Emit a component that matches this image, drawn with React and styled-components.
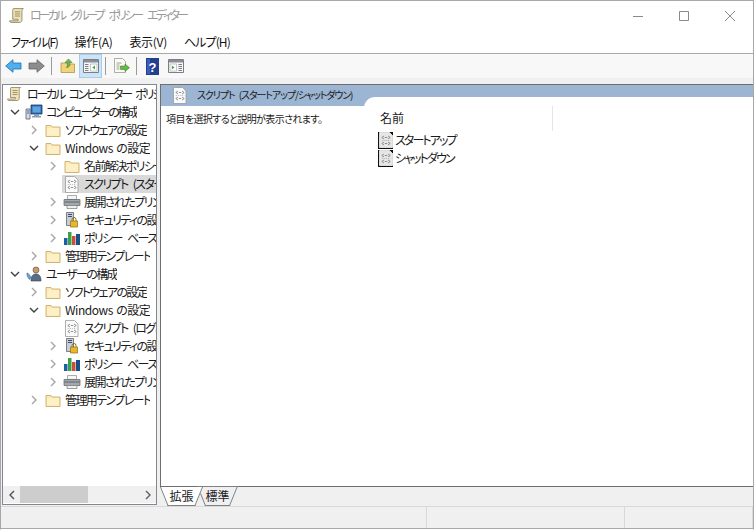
import React from "react"
import styled, { createGlobalStyle } from 'styled-components'

const Global = createGlobalStyle`
html, body { margin: 0; padding: 0; background: #fff; }
body {
  font-family: "Noto Sans CJK JP", "Noto Sans", sans-serif;
  font-feature-settings: "palt" 1;
  color: #1a1a1a;
}
`;

const ScrollIcon = ({ size = 16 }) => (
  <svg width={size} height={size} viewBox="0 0 16 16">
    <path d="M4 1.500h9.500c-1 .6-1.300 1.500-1.300 3v7.500c0 1.400-.8 2.500-2 2.500H2c-.9 0-1.500-.6-1.500-1.500h8c0-1 .2-1.500 0-1.500H3.500V4c0-1.300 0-2.500.5-2.500z" fill="#efe3b8" stroke="#8c7f5c" strokeWidth=".8" />
    <path d="M5.500 4.500h5M5.500 6.500h5M5.500 8.500h5" stroke="#8c7f5c" strokeWidth=".8" />
  </svg>
)

const FolderIcon = () => (
  <svg width="16" height="16" viewBox="0 0 16 16">
    <path d="M1 3.500h5l1.200 1.500H15v9.500H1z" fill="#fbe9b0" stroke="#c9ad6b" strokeWidth=".9" />
    <path d="M2 6h12v7.500H2z" fill="#fdf0c6" />
  </svg>
)

const ScriptIcon = ({ dark }) => (
  <svg width="16" height="17" viewBox="0 0 16 17" style={{ flex: 'none' }}>
    {dark && <path d="M0 0h15v17H0z" fill="#111" />}
    <path d={dark ? "M1.500 .5h10l3 3v12h-13z" : "M1.500 .5h9l3.500 3.500v12.500h-12.500z"} fill={dark ? "#e6e6e6" : "#fbfbfb"} stroke={dark ? "#f4f4f4" : "#9a9a9a"} strokeWidth=".8" />
    <path d="M6 4L3.800 5.500 6 7M10 4l2.200 1.500L10 7M6.800 5.500h2.400" stroke="#777" strokeWidth=".8" fill="none" />
    <path d="M3.800 8.500h8.400" stroke="#aaa" strokeWidth=".8" strokeDasharray="1 1" />
    <path d="M6 10l-2.200 1.500L6 13M10 10l2.200 1.500L10 13M6.800 11.500h2.400" stroke="#777" strokeWidth=".8" fill="none" />
  </svg>
)

const ComputerIcon = () => (
  <svg width="18" height="16" viewBox="0 0 18 16">
    <path d="M6 1h11v9H6z" fill="#2f6fb5" stroke="#16365e" strokeWidth=".8" />
    <path d="M7.500 2.500h8v6h-8z" fill="#5fa3e0" />
    <path d="M9 10h5v2h2v1.500H7V12h2z" fill="#8b9bb0" />
    <path d="M1 5h4v10H1z" fill="#d9dde3" stroke="#56606e" strokeWidth=".8" />
    <path d="M2 7h2M2 9h2" stroke="#2f6fb5" />
  </svg>
)

const UserIcon = () => (
  <svg width="18" height="16" viewBox="0 0 18 16">
    <circle cx="11" cy="4" r="3" fill="#c9996e" stroke="#5a4535" strokeWidth=".6" />
    <path d="M6 15c0-5 2-7 5-7s5 2 5 7z" fill="#5a6d85" stroke="#33404f" strokeWidth=".6" />
    <path d="M2 7c1.500 0 3 2.500 4 4.500l-1.500 2C3 12 1.500 9.500 2 7z" fill="#6fa6dc" stroke="#2e5f93" strokeWidth=".6" />
  </svg>
)

const PrinterIcon = () => (
  <svg width="18" height="16" viewBox="0 0 18 16">
    <path d="M4.500 1.500h9v4h-9z" fill="#f4f4f4" stroke="#8a8a8a" strokeWidth=".7" />
    <path d="M1 5.500h16v6H1z" fill="#a2a8ae" stroke="#5c6268" strokeWidth=".7" />
    <path d="M1.500 7.500h15v1h-15z" fill="#5c6268" />
    <path d="M4 11.500h10v3H4z" fill="#eeeeee" stroke="#7a7a7a" strokeWidth=".7" />
  </svg>
)

const SecurityIcon = () => (
  <svg width="16" height="16" viewBox="0 0 16 16">
    <path d="M2.500 .5h7v13h-7z" fill="#c9ced4" stroke="#5d6670" strokeWidth=".8" />
    <path d="M4 2.500h4M4 4.500h4" stroke="#34506e" strokeWidth="1" />
    <path d="M8 9V7.500a2 2 0 0 1 4 0V9" fill="none" stroke="#8c6d1f" strokeWidth="1" />
    <path d="M6.500 9h7v6h-7z" fill="#e8b923" stroke="#8c6d1f" strokeWidth=".7" />
  </svg>
)

const ChartIcon = () => (
  <svg width="18" height="16" viewBox="0 0 18 16">
    <path d="M1 8h3.500v7H1z" fill="#1b5fa5" />
    <path d="M5 2h3.500v13H5z" fill="#3aa04a" />
    <path d="M9 6h3.500v9H9z" fill="#c9503c" />
    <path d="M13 4h4v11h-4z" fill="#1b4f88" />
  </svg>
)

const BackIcon = () => (
  <svg width="17" height="16" viewBox="0 0 17 16">
    <path d="M.7 8L8 1.700V5h8v6H8v3.300z" fill="#4fb0ec" stroke="#1c6fb0" strokeWidth=".8" />
  </svg>
)

const ForwardIcon = () => (
  <svg width="17" height="16" viewBox="0 0 17 16">
    <path d="M16.300 8L9 1.700V5H1v6h8v3.300z" fill="#8c8c8c" stroke="#666" strokeWidth=".8" />
  </svg>
)

const UpIcon = () => (
  <svg width="16" height="16" viewBox="0 0 16 16">
    <path d="M1 5h5l1 1h7.500v8.500H1z" fill="#f3d27c" stroke="#b3924a" strokeWidth=".8" />
    <path d="M8.500 1L12 4.500H9.800V7c0 1.500-1.500 2.500-3.500 2.500C7.500 8.500 7.500 7.500 7.500 6V4.500H5z" fill="#6fb84a" stroke="#3f7f2a" strokeWidth=".6" />
  </svg>
)

const PaneIcon = ({ right }) => (
  <svg width="16" height="16" viewBox="0 0 16 16">
    <path d="M.5 1.500h15v13H.5z" fill="#f7f7f7" stroke="#7b7f85" />
    <path d="M1 2h14v2.500H1z" fill="#8a8f96" />
    {right ? (
      <>
        <path d="M2 6h6.500v7H2z" fill="#fff" stroke="#a0a4aa" strokeWidth=".6" />
        <path d="M3.800 7.500l2.700 2-2.700 2z" fill="#4aa24a" />
        <path d="M10.500 6.500h3.500M10.500 8.500h3.500M10.500 10.500h3.500M10.500 12.500h3.500" stroke="#7b7f85" />
      </>
    ) : (
      <>
        <path d="M2 6.500h3.500M2 8.500h3.500M2 10.500h3.500M2 12.500h3.500" stroke="#7b7f85" />
        <path d="M7.500 6h6.500v7H7.500z" fill="#fff" stroke="#a0a4aa" strokeWidth=".6" />
        <path d="M12 7.500l-2.700 2 2.700 2z" fill="#4aa24a" />
      </>
    )}
  </svg>
)

const ExportIcon = () => (
  <svg width="17" height="16" viewBox="0 0 17 16">
    <path d="M1.500 .5h8l3 3v11h-11z" fill="#fbfbf6" stroke="#9a9a8c" strokeWidth=".8" />
    <path d="M3.500 5h5M3.500 7h3M3.500 9h3M3.500 11h3" stroke="#8a8a80" strokeWidth=".8" />
    <path d="M12 6l4.500 3.700-4.500 3.700v-2H7.500V8H12z" fill="#67b84a" stroke="#3f7f2a" strokeWidth=".6" />
  </svg>
)

const HelpIcon = () => (
  <svg width="13" height="17" viewBox="0 0 13 17">
    <path d="M0 0h13v17H0z" fill="#23408f" />
    <path d="M1 1h3v15H1z" fill="#3b5cb8" />
    <text x="6.500" y="13.500" textAnchor="middle" fontSize="13" fontFamily="Liberation Sans" fontWeight="700" fill="#fff">?</text>
  </svg>
)

const Chevron = ({ dir }) => {
  const paths = { down: "M1 3l4 4 4-4", right: "M3 1l4 4-4 4", left: "M7 1L3 5l4 4" }
  const colors = { down: "#404040", right: "#a6a6a6", left: "#505050", end: "#606060" }
  return (
    <svg width="10" height="10" viewBox="0 0 10 10">
      <path d={dir === 'end' ? paths.right : paths[dir]} fill="none" stroke={colors[dir]} strokeWidth="1.400" />
    </svg>
  )
}

const icons = {
  scroll: <ScrollIcon />, computer: <ComputerIcon />, user: <UserIcon />, folder: <FolderIcon />,
  script: <ScriptIcon />, printer: <PrinterIcon />, security: <SecurityIcon />, chart: <ChartIcon />,
}

const treeRows = [
  { level: 0, icon: 'scroll', label: 'ローカル コンピューター ポリシー', tight: true },
  { level: 1, icon: 'computer', label: 'コンピューターの構成', open: true, tight: true },
  { level: 2, icon: 'folder', label: 'ソフトウェアの設定', closed: true },
  { level: 2, icon: 'folder', label: 'Windows の設定', open: true, latin: true },
  { level: 3, icon: 'folder', label: '名前解決ポリシー', closed: true },
  { level: 3, icon: 'script', label: 'スクリプト (スタートアップ/シャットダウン)', selected: true },
  { level: 3, icon: 'printer', label: '展開されたプリンター', closed: true },
  { level: 3, icon: 'security', label: 'セキュリティの設定', closed: true },
  { level: 3, icon: 'chart', label: 'ポリシー ベースの QoS', closed: true },
  { level: 2, icon: 'folder', label: '管理用テンプレート', closed: true },
  { level: 1, icon: 'user', label: 'ユーザーの構成', open: true },
  { level: 2, icon: 'folder', label: 'ソフトウェアの設定', closed: true },
  { level: 2, icon: 'folder', label: 'Windows の設定', open: true, latin: true },
  { level: 3, icon: 'script', label: 'スクリプト (ログオン/ログオフ)' },
  { level: 3, icon: 'security', label: 'セキュリティの設定', closed: true },
  { level: 3, icon: 'chart', label: 'ポリシー ベースの QoS', closed: true },
  { level: 3, icon: 'printer', label: '展開されたプリンター', closed: true },
  { level: 2, icon: 'folder', label: '管理用テンプレート', closed: true },
]

const App = () => {
  return (
    <Window>
      <Global />
      <TitleBar>
        <ScrollIcon size={17} />
        <TitleText>ローカル グループ ポリシー エディター</TitleText>
        <WinButtons>
          <WinBtn>
            <svg width="12" height="12" viewBox="0 0 12 12"><path d="M1 6.500h10" stroke="#8a8a8a" /></svg>
          </WinBtn>
          <WinBtn>
            <svg width="12" height="12" viewBox="0 0 12 12"><path d="M1.500 1.500h9v9h-9z" fill="none" stroke="#8a8a8a" /></svg>
          </WinBtn>
          <WinBtn>
            <svg width="12" height="12" viewBox="0 0 12 12"><path d="M1 1l10 10M11 1L1 11" stroke="#8a8a8a" /></svg>
          </WinBtn>
        </WinButtons>
      </TitleBar>

      <MenuBar>
        <MenuItem spacing="-1.4px">ファイル(F)</MenuItem>
        <MenuItem spacing="-0.3px">操作(A)</MenuItem>
        <MenuItem spacing="-0.3px">表示(V)</MenuItem>
        <MenuItem spacing="-0.9px">ヘルプ(H)</MenuItem>
      </MenuBar>

      <Toolbar>
        <ToolBtn><BackIcon /></ToolBtn>
        <ToolBtn><ForwardIcon /></ToolBtn>
        <ToolSep />
        <ToolBtn><UpIcon /></ToolBtn>
        <ToolBtn active><PaneIcon /></ToolBtn>
        <ToolSep />
        <ToolBtn><ExportIcon /></ToolBtn>
        <ToolSep />
        <ToolBtn><HelpIcon /></ToolBtn>
        <ToolBtn><PaneIcon right /></ToolBtn>
      </Toolbar>

      <Content>
        <TreePanel>
          <TreeList>
            {treeRows.map((r, i) => (
              <TreeRow key={i} level={r.level}>
                {r.level > 0 && (
                  <Expander>
                    {r.open && <Chevron dir="down" />}
                    {r.closed && <Chevron dir="right" />}
                  </Expander>
                )}
                <TreeItem selected={r.selected}>
                  <TreeIcon>{icons[r.icon]}</TreeIcon>
                  <TreeLabel latin={r.latin} tight={r.tight}>{r.label}</TreeLabel>
                </TreeItem>
              </TreeRow>
            ))}
          </TreeList>
          <HScroll>
            <ScrollBtn><Chevron dir="left" /></ScrollBtn>
            <ScrollTrack><ScrollThumb /></ScrollTrack>
            <ScrollBtn><Chevron dir="end" /></ScrollBtn>
          </HScroll>
        </TreePanel>

        <RightColumn>
          <DetailPanel>
            <DescPane>
              <DescHeader>
                <ScriptIcon />
                <DescTitle>スクリプト (スタートアップ/シャットダウン)</DescTitle>
              </DescHeader>
              <DescText>項目を選択すると説明が表示されます。</DescText>
            </DescPane>
            <ListPane>
              <ListArea>
                <ListHead>
                  <NameCol>名前</NameCol>
                </ListHead>
                <ListRow><ScriptIcon dark /><RowText>スタートアップ</RowText></ListRow>
                <ListRow><ScriptIcon dark /><RowText>シャットダウン</RowText></ListRow>
              </ListArea>
            </ListPane>
          </DetailPanel>
          <Tabs>
            <Tab first>拡張</Tab>
            <Tab>標準</Tab>
          </Tabs>
        </RightColumn>
      </Content>

      <StatusBar>
        <StatusCell />
        <StatusCell w="197px" />
        <StatusCell w="127px" />
      </StatusBar>
    </Window>
  )
}

export default App;

const Window = styled.div`
width: 754px;
height: 530px;
box-sizing: border-box;
display: flex;
flex-direction: column;
background: #fff;
overflow: hidden;
border-top: 1px solid #a8a8a8;
border-left: 1px solid #a8a8a8;
border-right: 1px solid #a8a8a8;
border-bottom: 1px solid #fff;
font-size: 12px;
`;

const TitleBar = styled.div`
height: 29px;
display: flex;
align-items: center;
padding-left: 8px;
color: #9a9a9a;
`;

const TitleText = styled.div`
margin-left: 4px;
padding-bottom: 2px;
font-size: 12px;
letter-spacing: -2.9px;
word-spacing: 6px;
`;

const WinButtons = styled.div`
margin-left: auto;
display: flex;
`;

const WinBtn = styled.div`
width: 46px;
height: 29px;
display: flex;
align-items: center;
justify-content: center;
`;

const MenuBar = styled.div`
height: 24px;
box-sizing: border-box;
display: flex;
align-items: center;
gap: 17px;
padding-left: 10px;
border-bottom: 1px solid #a8a8a8;
font-size: 12px;
color: #111;
`;

const MenuItem = styled.div`
white-space: nowrap;
letter-spacing: ${props => props.spacing};
`;

const Toolbar = styled.div`
height: 24px;
flex: none;
display: flex;
align-items: center;
padding-left: 1px;
background: #f8f8f8;
`;

const ToolBtn = styled.div`
width: 23px;
height: 24px;
box-sizing: border-box;
display: flex;
align-items: center;
justify-content: center;
background: ${props => props.active ? '#cce4f7' : 'transparent'};
border: 1px solid ${props => props.active ? '#a5cdec' : 'transparent'};
`;

const ToolSep = styled.div`
width: 1px;
height: 18px;
background: #9a9a9a;
margin: 0 4px 0 3px;
`;

const Content = styled.div`
flex: 1;
min-height: 0;
display: flex;
gap: 3px;
padding: 6px 0 0 1px;
background: #f0f0f0;
`;

const TreePanel = styled.div`
width: 155px;
height: 421px;
box-sizing: border-box;
display: flex;
flex-direction: column;
background: #fff;
border: 1px solid #828790;
`;

const TreeList = styled.div`
flex: 1;
min-height: 0;
overflow: hidden;
`;

const TreeRow = styled.div`
height: 18px;
display: flex;
align-items: center;
padding-left: ${props => props.level === 0 ? 2 : 2 + (props.level - 1) * 19}px;
`;

const Expander = styled.div`
width: 19px;
flex: none;
display: flex;
align-items: center;
justify-content: center;
`;

const TreeItem = styled.div`
flex: 1;
min-width: 0;
height: 18px;
display: flex;
align-items: center;
gap: 3px;
padding-left: 1px;
background: ${props => props.selected ? '#d9d9d9' : 'transparent'};
`;

const TreeIcon = styled.div`
width: 18px;
height: 16px;
flex: none;
display: flex;
justify-content: center;
`;

const TreeLabel = styled.div`
white-space: nowrap;
overflow: hidden;
padding-bottom: 2px;
letter-spacing: ${props => props.latin ? '-0.45px' : props.tight ? '-2.2px' : '-1.6px'};
word-spacing: ${props => props.latin ? '1px' : '4px'};
`;

const HScroll = styled.div`
height: 17px;
flex: none;
display: flex;
background: #f0f0f0;
margin-bottom: 1px;
`;

const ScrollBtn = styled.div`
width: 17px;
flex: none;
display: flex;
align-items: center;
justify-content: center;
`;

const ScrollTrack = styled.div`
flex: 1;
`;

const ScrollThumb = styled.div`
width: 68px;
height: 100%;
background: #cdcdcd;
`;

const RightColumn = styled.div`
flex: 1;
min-width: 0;
display: flex;
flex-direction: column;
`;

const DetailPanel = styled.div`
height: 403px;
flex: none;
box-sizing: border-box;
display: flex;
background: #fff;
border: 1px solid #6e6e6e;
border-right: none;
`;

const DescPane = styled.div`
width: 203px;
flex: none;
`;

const DescHeader = styled.div`
height: 21px;
display: flex;
align-items: center;
gap: 9px;
padding-left: 11px;
background: #9bb5d2;
font-size: 10px;
color: #1a1a1a;
`;

const DescTitle = styled.div`
white-space: nowrap;
padding-bottom: 2px;
letter-spacing: -1.1px;
word-spacing: 3px;
`;

const DescText = styled.div`
padding: 5px 0 0 5px;
font-size: 10px;
line-height: 15px;
white-space: nowrap;
letter-spacing: -0.6px;
`;

const ListPane = styled.div`
flex: 1;
background: linear-gradient(#9bb5d2 0 21px, #fff 21px);
`;

const ListArea = styled.div`
margin-top: 12px;
height: calc(100% - 12px);
padding-top: 9px;
box-sizing: border-box;
background: #fff;
border-top-left-radius: 11px;
`;

const ListHead = styled.div`
height: 25px;
width: 189px;
box-sizing: border-box;
border-right: 1px solid #e5e5e5;
padding: 3px 0 0 16px;
`;

const NameCol = styled.div`
font-size: 12px;
`;

const ListRow = styled.div`
height: 18px;
display: flex;
align-items: center;
padding-left: 14px;
gap: 1px;
font-size: 12px;
`;

const RowText = styled.span`
letter-spacing: -1.9px;
padding-bottom: 1px;
`;

const Tabs = styled.div`
height: 19px;
display: flex;
`;

const Tab = styled.div`
position: relative;
z-index: ${props => props.first ? 2 : 1};
height: 19px;
width: ${props => props.first ? 43 : 41}px;
margin-left: ${props => props.first ? 0 : -6}px;
display: flex;
align-items: center;
justify-content: center;
font-size: 12px;
padding-bottom: 2px;
box-sizing: border-box;
&::before, &::after {
  content: "";
  position: absolute;
  top: ${props => props.first ? '0' : '-1px'};
  bottom: 0;
  width: 55%;
  z-index: -1;
  background: ${props => props.first ? '#fff' : '#f0f0f0'};
  border-bottom: 1px solid #808080;
  border-top: ${props => props.first ? 'none' : '1px solid #808080'};
}
&::before {
  left: 0;
  border-left: 1px solid #808080;
  transform-origin: top left;
  transform: skewX(22deg);
}
&::after {
  right: 0;
  border-right: 1px solid #808080;
  transform-origin: top right;
  transform: skewX(-22deg);
}
`;

const StatusBar = styled.div`
height: 23px;
flex: none;
box-sizing: border-box;
display: flex;
background: #f0f0f0;
border-top: 1px solid #d9d9d9;
border-bottom: 1px solid #a8a8a8;
`;

const StatusCell = styled.div`
flex: ${props => props.w ? 'none' : 1};
width: ${props => props.w || 'auto'};
border-right: 1px solid #d9d9d9;
`;
